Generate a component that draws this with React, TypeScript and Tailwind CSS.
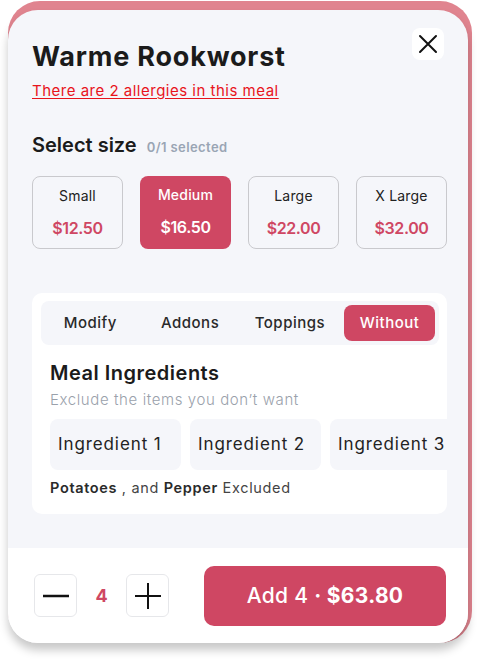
import React from "react";

export default function App() {
  const sizes = [
    { label: "Small", price: "$12.50", active: false },
    { label: "Medium", price: "$16.50", active: true },
    { label: "Large", price: "$22.00", active: false },
    { label: "X Large", price: "$32.00", active: false },
  ];
  const tabs = ["Modify", "Addons", "Toppings", "Without"];
  return (
    <div
      className="w-[480px] h-[660px] bg-white pl-2 pt-px"
      style={{ fontFamily: "Inter, 'Noto Sans', sans-serif" }}
    >
      <div className="w-[464px] rounded-[32px] bg-[#e0848f] pt-[9px] pr-1">
        <div className="h-[633px] rounded-[30px] bg-[#f5f6fa] overflow-hidden flex flex-col shadow-[0_7px_10px_rgba(0,0,0,0.22)]">
          <div className="flex-1 flex flex-col pl-6 pr-[21px]">
            <div className="flex justify-between items-start pt-[18px]">
              <div className="pt-[13px]">
                <div className="text-[27px] leading-[32px] font-bold text-[#1b1b1b] tracking-[0.8px]">
                  Warme Rookworst
                </div>
                <div className="mt-[8px] text-[15px] leading-[20px] text-[#e8141c] underline underline-offset-2 tracking-[0.5px]">
                  There are 2 allergies in this meal
                </div>
              </div>
              <button className="w-8 h-8 mr-[3px] rounded-lg bg-white flex items-center justify-center">
                <svg width="20" height="20" viewBox="0 0 20 20">
                  <path d="M2 2 L18 18 M18 2 L2 18" stroke="#111" strokeWidth="2" strokeLinecap="round" />
                </svg>
              </button>
            </div>

            <div className="mt-[31px] flex items-baseline gap-[10px]">
              <span className="text-[20px] leading-[26px] font-semibold text-[#1b1b1b]">Select size</span>
              <span className="text-[13px] font-semibold text-[#9aa5b4] tracking-[0.4px]">0/1 selected</span>
            </div>

            <div className="mt-[18px] grid grid-cols-4 gap-[17px] w-[415px]">
              {sizes.map((s) => (
                <div
                  key={s.label}
                  className={
                    s.active
                      ? "h-[73px] rounded-lg bg-[#cf4763] flex flex-col items-center pt-[9px]"
                      : "h-[73px] rounded-lg border border-[#c9c9cd] flex flex-col items-center pt-[9px]"
                  }
                >
                  <span className={s.active ? "text-[14px] leading-[20px] font-medium text-white tracking-[0.2px]" : "text-[14px] leading-[20px] text-[#222] tracking-[0.2px]"}>
                    {s.label}
                  </span>
                  <span className={s.active ? "mt-[12px] text-[16px] leading-[20px] font-semibold text-white tracking-[-0.4px]" : "mt-[12px] text-[16px] leading-[20px] font-semibold text-[#cf4763] tracking-[-0.4px]"}>
                    {s.price}
                  </span>
                </div>
              ))}
            </div>

            <div className="mt-[44px] w-[415px] h-[221px] rounded-[10px] bg-white overflow-hidden pt-2">
              <div className="mx-[9px] mr-2 h-[44px] rounded-lg bg-[#f5f6fa] flex items-center gap-[9px] px-1">
                {tabs.map((t) => (
                  <div
                    key={t}
                    className={
                      t === "Without"
                        ? "w-[91px] h-[36px] rounded-lg bg-[#cf4763] text-white flex items-center justify-center text-[15px] font-medium tracking-[0.5px]"
                        : "w-[91px] h-[36px] rounded-lg text-[#2a2a2a] flex items-center justify-center text-[15px] font-medium tracking-[0.5px]"
                    }
                  >
                    {t}
                  </div>
                ))}
              </div>
              <div className="pl-[18px]">
                <div className="mt-[16px] text-[20px] leading-[24px] font-semibold text-[#1b1b1b] tracking-[0.5px]">Meal Ingredients</div>
                <div className="mt-[5px] text-[15px] leading-[20px] font-light text-[#9aa1ab] tracking-[0.6px]">
                  Exclude the items you don’t want
                </div>
                <div className="mt-[9px] flex gap-[9px]">
                  {["Ingredient 1", "Ingredient 2", "Ingredient 3"].map((i) => (
                    <div
                      key={i}
                      className="shrink-0 w-[131px] h-[51px] rounded-lg bg-[#f5f6fa] pl-[8px] flex items-center text-[17px] text-[#222] tracking-[0.9px]"
                    >
                      {i}
                    </div>
                  ))}
                </div>
                <div className="mt-[8px] text-[14.5px] leading-[20px] text-[#444] tracking-[0.65px]">
                  <span className="font-semibold text-[#2a2a2a]">Potatoes</span> , and{" "}
                  <span className="font-semibold text-[#2a2a2a]">Pepper</span> Excluded
                </div>
              </div>
            </div>
          </div>

          <div className="h-[95px] bg-white flex items-center pl-[26px] pr-[22px]">
            <button className="w-[43px] h-[43px] rounded-md border border-[#e6e7ea] bg-white flex items-center justify-center">
              <svg width="26" height="26" viewBox="0 0 26 26">
                <path d="M0 13 H26" stroke="#111" strokeWidth="2.4" />
              </svg>
            </button>
            <span className="w-[49px] text-center text-[18px] font-bold text-[#cf4763]">4</span>
            <button className="w-[43px] h-[43px] rounded-md border border-[#e6e7ea] bg-white flex items-center justify-center">
              <svg width="26" height="26" viewBox="0 0 26 26">
                <path d="M0 13 H26 M13 0 V26" stroke="#111" strokeWidth="2" />
              </svg>
            </button>
            <button className="ml-auto w-[242px] h-[60px] rounded-[10px] bg-[#cf4763] text-white text-[21px] flex items-center justify-center tracking-[0.3px]">
              <span className="font-medium">Add 4&nbsp;</span>
              <span className="font-bold">·</span>
              <span className="font-bold">&nbsp;$63.80</span>
            </button>
          </div>
        </div>
      </div>
    </div>
  );
}
